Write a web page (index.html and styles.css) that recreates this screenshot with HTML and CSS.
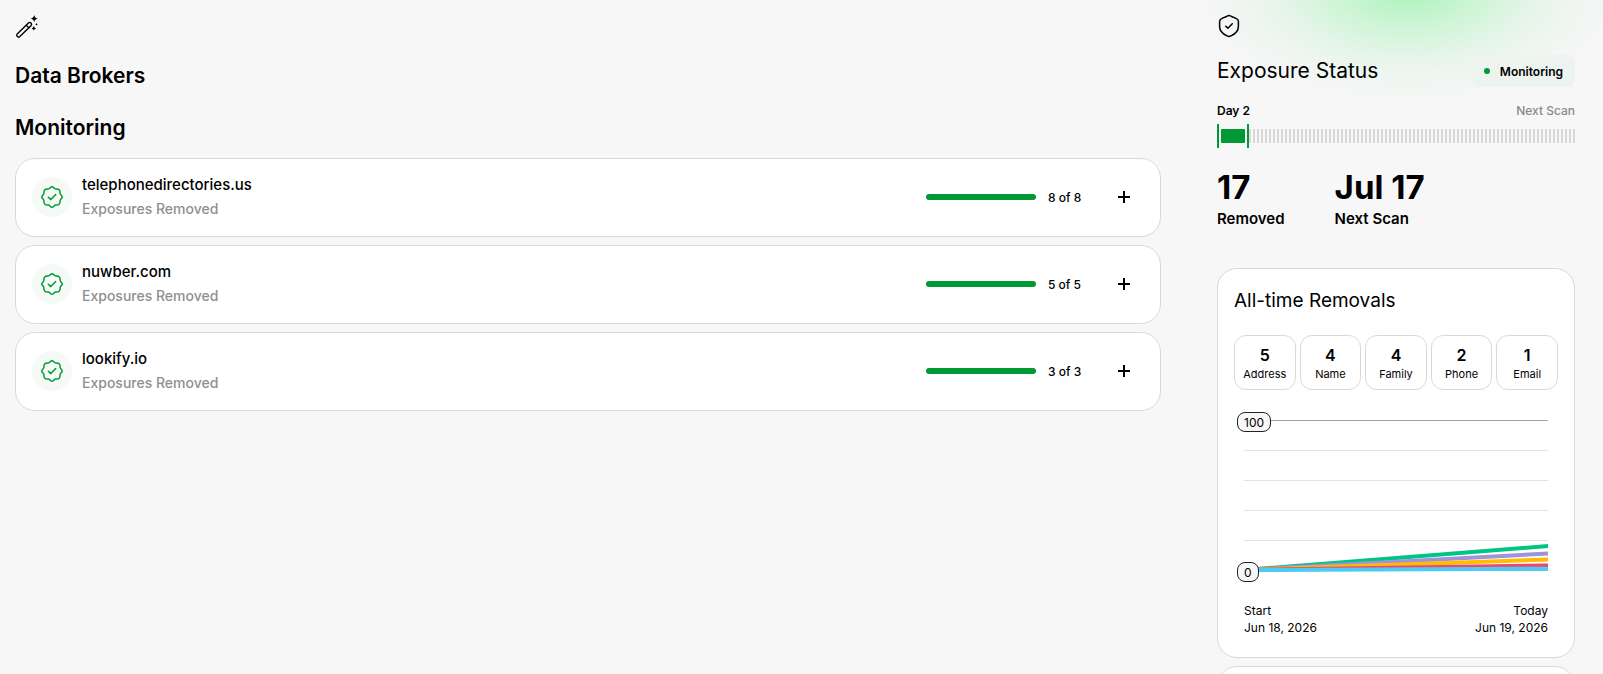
FILE: index.html
```html
<!DOCTYPE html>
<html lang="en">
<head>
    <meta charset="UTF-8">
    <meta name="viewport" content="width=device-width, initial-scale=1.0">
    <title>Data Brokers</title>
    <link rel="stylesheet" href="styles.css">
</head>
<body>
    <svg class="sprite" aria-hidden="true">
        <symbol id="badge-check" viewBox="0 0 24 24">
            <path d="M12 1.7C13.6 1.7 14.1 4 15.9 3.9C17.3 3.9 18.3 3.8 19.2 4.8C20.2 5.7 20.1 6.7 20.1 8.1C20 9.9 22.3 10.4 22.3 12C22.3 13.6 20 14.1 20.1 15.9C20.1 17.3 20.2 18.3 19.2 19.2C18.3 20.2 17.3 20.1 15.9 20.1C14.1 20 13.6 22.3 12 22.3C10.4 22.3 9.9 20 8.1 20.1C6.7 20.1 5.7 20.2 4.8 19.2C3.8 18.3 3.9 17.3 3.9 15.9C4 14.1 1.7 13.6 1.7 12C1.7 10.4 4 9.9 3.9 8.1C3.9 6.7 3.8 5.7 4.8 4.8C5.7 3.8 6.7 3.9 8.1 3.9C9.9 4 10.4 1.7 12 1.7Z"/>
            <path d="M8.3 12.3L10.8 14.6L15.7 9.6"/>
        </symbol>
        <symbol id="plus" viewBox="0 0 16 16">
            <path d="M8 2v12M2 8h12"/>
        </symbol>
    </svg>

    <div class="page">
        <main class="main">
            <svg class="page-icon" viewBox="0 0 24 24" aria-hidden="true">
                <path class="line" d="M2.2 18.9L13.4 7.9Q14.7 6.8 16 8Q17.2 9.4 16 10.7L4.8 21.4Q3.5 22.6 2.3 21.5Q1.1 20.2 2.2 18.9ZM11.2 10.2L13.8 12.8"/>
                <path d="M19.2 0Q19.7 3 22.9 3.6Q19.7 4.2 19.2 7.2Q18.7 4.2 15.5 3.6Q18.7 3 19.2 0ZM18.8 11Q19.1 13 21 13.4Q19.1 13.8 18.8 15.7Q18.5 13.8 16.6 13.4Q18.5 13 18.8 11ZM21.5 8.2L22.6 9.3L21.5 10.4L20.4 9.3Z"/>
            </svg>
            <h1>Data Brokers</h1>
            <h2>Monitoring</h2>

            <div class="brokers">
                <div class="broker">
                    <span class="broker-icon"><svg><use href="#badge-check"/></svg></span>
                    <div class="broker-text">
                        <div class="broker-name">telephonedirectories.us</div>
                        <div class="broker-state">Exposures Removed</div>
                    </div>
                    <div class="bar"><div class="bar-fill" style="width: 100%"></div></div>
                    <div class="count">8 of 8</div>
                    <button class="expand" aria-label="Expand telephonedirectories.us"><svg><use href="#plus"/></svg></button>
                </div>
                <div class="broker">
                    <span class="broker-icon"><svg><use href="#badge-check"/></svg></span>
                    <div class="broker-text">
                        <div class="broker-name">nuwber.com</div>
                        <div class="broker-state">Exposures Removed</div>
                    </div>
                    <div class="bar"><div class="bar-fill" style="width: 100%"></div></div>
                    <div class="count">5 of 5</div>
                    <button class="expand" aria-label="Expand nuwber.com"><svg><use href="#plus"/></svg></button>
                </div>
                <div class="broker">
                    <span class="broker-icon"><svg><use href="#badge-check"/></svg></span>
                    <div class="broker-text">
                        <div class="broker-name">lookify.io</div>
                        <div class="broker-state">Exposures Removed</div>
                    </div>
                    <div class="bar"><div class="bar-fill" style="width: 100%"></div></div>
                    <div class="count">3 of 3</div>
                    <button class="expand" aria-label="Expand lookify.io"><svg><use href="#plus"/></svg></button>
                </div>
            </div>
        </main>

        <aside class="side">
            <svg class="page-icon" viewBox="0 0 24 24" aria-hidden="true">
                <path class="shield" d="M12 1.5C13 1.5 13.7 2.1 14.5 2.5L19 4.4C20.6 5.1 21.4 5.6 21.4 7.5V12.5C21.4 18 17.5 20.3 14 21.9C12.5 22.7 11.5 22.7 10 21.9C6.5 20.3 2.6 18 2.6 12.5V7.5C2.6 5.6 3.4 5.1 5 4.4L9.5 2.5C10.3 2.1 11 1.5 12 1.5Z"/>
                <path class="shield" d="M8.7 12.3L10.9 14.3L15.3 9.8"/>
            </svg>

            <div class="status-head">
                <h2 class="side-title">Exposure Status</h2>
                <span class="pill"><span class="dot"></span>Monitoring</span>
            </div>

            <div class="scan-labels">
                <span>Day 2</span>
                <span class="muted">Next Scan</span>
            </div>
            <div class="scan">
                <div class="scan-mark"></div>
                <div class="scan-done"></div>
                <div class="scan-mark"></div>
                <div class="scan-rest"></div>
            </div>

            <div class="stats">
                <div class="stat">
                    <div class="stat-value">17</div>
                    <div class="stat-label">Removed</div>
                </div>
                <div class="stat">
                    <div class="stat-value">Jul 17</div>
                    <div class="stat-label">Next Scan</div>
                </div>
            </div>

            <section class="card">
                <h2 class="card-title">All-time Removals</h2>
                <div class="types">
                    <div class="type"><b>5</b><span>Address</span></div>
                    <div class="type"><b>4</b><span>Name</span></div>
                    <div class="type"><b>4</b><span>Family</span></div>
                    <div class="type"><b>2</b><span>Phone</span></div>
                    <div class="type"><b>1</b><span>Email</span></div>
                </div>
                <div class="chart">
                    <svg class="plot" viewBox="0 0 304 150" preserveAspectRatio="none" aria-hidden="true">
                        <g class="grid">
                            <path class="top" d="M0 .5H304"/>
                            <path d="M0 30.5H304M0 60.5H304M0 90.5H304M0 120.5H304"/>
                            <path class="top" d="M0 150.5H304"/>
                        </g>
                        <g class="series">
                            <path stroke="#00c482" d="M0 150L304 126"/>
                            <path stroke="#9f93dd" d="M0 150L304 133.5"/>
                            <path stroke="#ffbc00" d="M0 150L304 139.5"/>
                            <path stroke="#f0476c" d="M0 150L304 145.5"/>
                            <path stroke="#4ccbf5" d="M0 150L304 148.7"/>
                        </g>
                    </svg>
                    <span class="axis axis-top">100</span>
                    <span class="axis axis-bottom">0</span>
                </div>
                <div class="dates">
                    <div>Start<br>Jun 18, 2026</div>
                    <div class="date-end">Today<br>Jun 19, 2026</div>
                </div>
            </section>
            <section class="card"></section>
        </aside>
    </div>
</body>
</html>
```

FILE: styles.css
```css
* {
    box-sizing: border-box;
}

body {
    margin: 0;
    background-color: #f7f7f7;
    color: #000;
    font-family: Inter, "Liberation Sans", sans-serif;
}

h1, h2 {
    margin: 0;
    font-size: 21px;
    line-height: 28px;
    font-weight: 600;
}

.sprite {
    display: none;
}

/* both columns scroll on their own */
.page {
    display: flex;
    height: 100vh;
}

.main,
.side {
    overflow-y: auto;
    scrollbar-width: none;
}

.main {
    flex: 1;
    min-width: 0;
    padding: 15px 28px 0 15px;
}

.page-icon {
    display: block;
    width: 24px;
    height: 24px;
}

.page-icon .line {
    fill: none;
    stroke: #000;
    stroke-width: 1.4;
}

.shield {
    fill: none;
    stroke: #000;
    stroke-width: 1.5;
    stroke-linecap: round;
    stroke-linejoin: round;
}

.main h1 {
    margin-top: 23px;
}

.main h2 {
    margin-top: 24px;
}

.brokers {
    display: flex;
    flex-direction: column;
    gap: 8px;
    margin-top: 16px;
}

.broker {
    display: flex;
    align-items: center;
    padding: 14px 16px 15px;
    background-color: #fff;
    border: 1px solid #d9d9d9;
    border-radius: 20px;
}

.broker-icon {
    display: flex;
    align-items: center;
    justify-content: center;
    width: 40px;
    height: 40px;
    margin-right: 10px;
    border-radius: 50%;
    background-color: #f5faf7;
}

.broker-icon svg {
    width: 24px;
    height: 24px;
    fill: none;
    stroke: #009933;
    stroke-width: 1.5;
    stroke-linecap: round;
    stroke-linejoin: round;
}

.broker-text {
    flex: 1;
    font-size: 15px;
    line-height: 24px;
    font-weight: 500;
}

.broker-state {
    color: #8f8f8f;
    font-size: 14px;
}

.bar {
    width: 110px;
    height: 6px;
    border-radius: 3px;
    background-color: #d9d9d9;
    overflow: hidden;
}

.bar-fill {
    height: 100%;
    background-color: #009933;
}

.count {
    width: 56px;
    margin-left: 12px;
    font-size: 12px;
    font-weight: 500;
}

.expand {
    display: flex;
    align-items: center;
    justify-content: center;
    width: 40px;
    height: 40px;
    padding: 0;
    border: none;
    background: none;
    cursor: pointer;
}

.expand svg {
    width: 16px;
    height: 16px;
    stroke: #000;
    stroke-width: 2;
}

.side {
    width: 414px;
    padding: 14px 28px 0;
    background-image: radial-gradient(ellipse 220px 120px at 219px -14px, #acf3ba 0%, #b6f3c2 12%, #d2f5d9 38%, #e6f5e9 60%, #f1f6f2 80%, #f7f7f7 100%);
}

.status-head {
    display: flex;
    align-items: center;
    justify-content: space-between;
    margin-top: 17px;
}

.side-title {
    font-weight: 400;
}

.card-title {
    font-size: 19px;
    font-weight: 400;
}

.pill {
    display: flex;
    align-items: center;
    height: 32px;
    padding: 0 12px;
    border-radius: 8px;
    background-color: #edf3ef;
    font-size: 12px;
    font-weight: 600;
}

.dot {
    width: 6px;
    height: 6px;
    margin-right: 10px;
    border-radius: 50%;
    background-color: #009933;
}

.scan-labels {
    display: flex;
    justify-content: space-between;
    margin-top: 16px;
    font-size: 12px;
    line-height: 16px;
    font-weight: 600;
}

.muted {
    color: #8a8a8a;
    font-weight: 500;
}

.scan {
    display: flex;
    align-items: center;
    margin-top: 5px;
}

.scan-mark {
    width: 2px;
    height: 24px;
    background-color: #009933;
}

.scan-done {
    width: 24px;
    height: 14px;
    margin: 0 2px;
    border-radius: 1px;
    background-color: #009933;
}

.scan-rest {
    flex: 1;
    height: 14px;
    background-image: repeating-linear-gradient(to right, #d9d9d9 0, #d9d9d9 2px, transparent 2px, transparent 4px);
}

.stats {
    display: flex;
    gap: 50px;
    margin-top: 19px;
}

.stat-value {
    font-size: 33px;
    line-height: 40px;
    font-weight: 700;
}

.stat-label {
    font-size: 15px;
    line-height: 24px;
    font-weight: 600;
}

.stats + .card {
    margin-top: 37px;
}

.card {
    min-height: 80px;
    margin-top: 8px;
    padding: 18px 16px 21px;
    background-color: #fff;
    border: 1px solid #d9d9d9;
    border-radius: 20px;
}

.types {
    display: grid;
    grid-template-columns: repeat(5, 1fr);
    gap: 4px;
    margin-top: 20px;
}

.type {
    display: flex;
    flex-direction: column;
    align-items: center;
    padding: 9px 0 6px;
    border: 1px solid #d9d9d9;
    border-radius: 12px;
    font-size: 11px;
    line-height: 18px;
}

.type b {
    font-size: 16px;
    line-height: 20px;
    font-weight: 600;
}

.chart {
    position: relative;
    margin: 30px 10px 0;
}

.plot {
    display: block;
    width: 100%;
    height: 150px;
    overflow: visible;
}

.grid path {
    stroke: #e2e2e2;
}

.grid .top {
    stroke: #a3a3a3;
}

.series path {
    stroke-width: 4;
}

.axis {
    position: absolute;
    left: -7px;
    height: 20px;
    padding: 0 6px;
    border: 1px solid #222;
    border-radius: 8px;
    background-color: #f7f7f7;
    font-size: 12px;
    line-height: 19px;
}

.axis-top {
    top: -8px;
}

.axis-bottom {
    bottom: -12px;
}

.dates {
    display: flex;
    justify-content: space-between;
    margin: 32px 10px 0;
    font-size: 12px;
    line-height: 17px;
}

.date-end {
    text-align: right;
}
```
